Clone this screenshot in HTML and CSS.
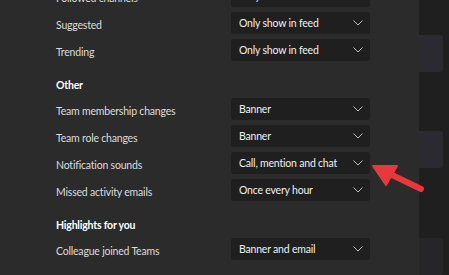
FILE: index.html
```html
<!DOCTYPE html>
<html lang="en">

<head>
    <meta charset="UTF-8">
    <title>Notification settings</title>
    <link rel="stylesheet" href="styles.css">
</head>

<body>
    <div class="app">
        <div class="settings">
            <div class="list">
                <div class="row">
                    <span class="label">Followed channels</span>
                    <div class="select"><span>Only show in feed</span><svg class="chev" viewBox="0 0 10 6"><path d="M0.5 0.5 L5 5 L9.5 0.5"/></svg></div>
                </div>
                <div class="row">
                    <span class="label">Suggested</span>
                    <div class="select"><span>Only show in feed</span><svg class="chev" viewBox="0 0 10 6"><path d="M0.5 0.5 L5 5 L9.5 0.5"/></svg></div>
                </div>
                <div class="row">
                    <span class="label">Trending</span>
                    <div class="select"><span>Only show in feed</span><svg class="chev" viewBox="0 0 10 6"><path d="M0.5 0.5 L5 5 L9.5 0.5"/></svg></div>
                </div>

                <div class="heading">Other</div>
                <div class="row">
                    <span class="label">Team membership changes</span>
                    <div class="select"><span>Banner</span><svg class="chev" viewBox="0 0 10 6"><path d="M0.5 0.5 L5 5 L9.5 0.5"/></svg></div>
                </div>
                <div class="row">
                    <span class="label">Team role changes</span>
                    <div class="select"><span>Banner</span><svg class="chev" viewBox="0 0 10 6"><path d="M0.5 0.5 L5 5 L9.5 0.5"/></svg></div>
                </div>
                <div class="row">
                    <span class="label">Notification sounds</span>
                    <div class="select"><span>Call, mention and chat</span><svg class="chev" viewBox="0 0 10 6"><path d="M0.5 0.5 L5 5 L9.5 0.5"/></svg></div>
                </div>
                <div class="row">
                    <span class="label">Missed activity emails</span>
                    <div class="select"><span>Once every hour</span><svg class="chev" viewBox="0 0 10 6"><path d="M0.5 0.5 L5 5 L9.5 0.5"/></svg></div>
                </div>

                <div class="heading">Highlights for you</div>
                <div class="row">
                    <span class="label">Colleague joined Teams</span>
                    <div class="select"><span>Banner and email</span><svg class="chev" viewBox="0 0 10 6"><path d="M0.5 0.5 L5 5 L9.5 0.5"/></svg></div>
                </div>
            </div>
        </div>

        <div class="side">
            <div class="card"></div>
            <div class="card"></div>
            <div class="card card-dim"></div>
        </div>

        <!-- red callout arrow pointing at the sounds dropdown -->
        <svg class="callout" width="449" height="275" viewBox="0 0 449 275">
            <line x1="421" y1="189" x2="388" y2="173" stroke="#e8383b" stroke-width="6" stroke-linecap="round"/>
            <polygon points="373,166 397,166 386,185" fill="#e8383b" stroke="#e8383b" stroke-width="2" stroke-linejoin="round"/>
        </svg>
    </div>
</body>

</html>
```

FILE: styles.css
```css
body {
    margin: 0;
    background-color: #201f1f;
    font-family: Lato, 'Open Sans', sans-serif;
    font-size: 10.5px;
    letter-spacing: -0.2px;
    overflow: hidden;
}

.app {
    display: flex;
    height: 275px;
    position: relative;
}

.settings {
    width: 419px;
    flex-shrink: 0;
    background-color: #2b2b2b;
    overflow: hidden;
}

.list {
    display: flex;
    flex-direction: column;
    gap: 5px;
    margin-top: -15px;
    padding-left: 56px;
}

.row {
    display: grid;
    grid-template-columns: 175px 139px;
    align-items: center;
    height: 22px;
}

.label {
    box-sizing: border-box;
    height: 22px;
    padding-top: 5px;
    line-height: 17px;
    color: #dcdcdc;
    white-space: nowrap;
}

.select {
    display: flex;
    align-items: center;
    justify-content: space-between;
    box-sizing: border-box;
    height: 22px;
    padding: 0 7px 0 8px;
    background-color: #1f1f1f;
    border-radius: 3px;
    color: #efefef;
    white-space: nowrap;
}

.chev {
    width: 10px;
    height: 6px;
    fill: none;
    stroke: #bdbdbd;
    stroke-width: 1;
}

.heading {
    height: 18px;
    line-height: 20px;
    margin-top: 9px;
    color: #fff;
    font-weight: 700;
}

.side {
    display: flex;
    flex-direction: column;
    padding-top: 35px;
}

.card {
    width: 24px;
    height: 37px;
    background-color: #2b2a30;
    border-radius: 0 3px 3px 0;
}

.card + .card {
    margin-top: 59px;
}

.card + .card + .card {
    margin-top: 70px;
    background-color: #262528;
}

.callout {
    position: absolute;
    left: 0;
    top: 0;
    pointer-events: none;
}
```
